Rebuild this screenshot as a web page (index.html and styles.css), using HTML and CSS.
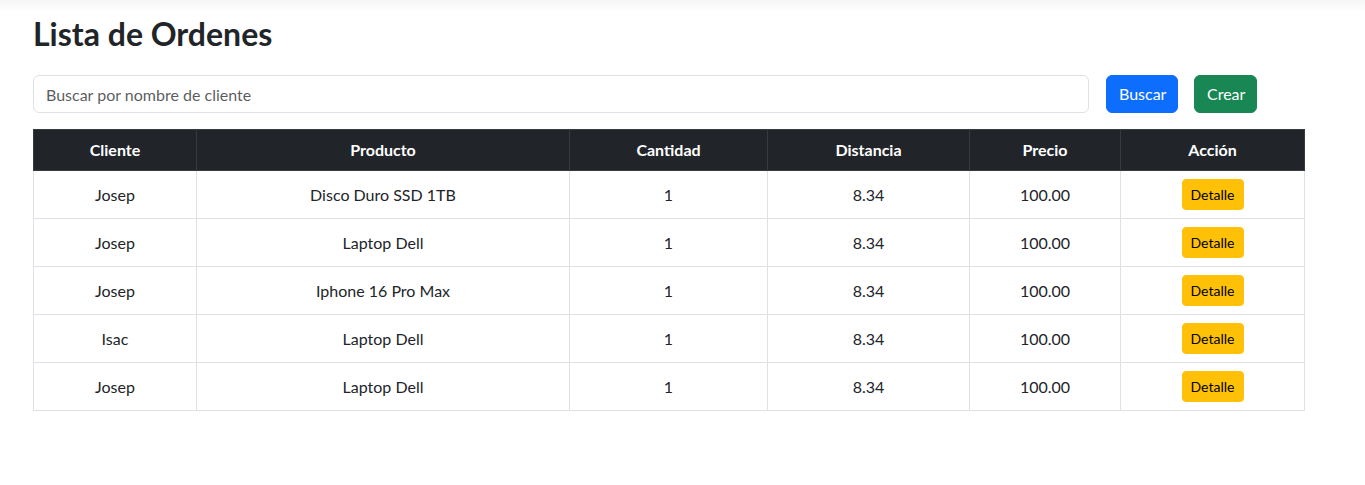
FILE: index.html
```html
<!DOCTYPE html>
<html lang="es">
<head>
<meta charset="utf-8">
<title>Lista de Ordenes</title>
<link rel="stylesheet" href="styles.css">
</head>
<body>
<div class="shade"></div>
<main class="container">
  <h2 class="title">Lista de Ordenes</h2>
  <div class="search-row">
    <input class="search-input" type="text" placeholder="Buscar por nombre de cliente">
    <button class="btn btn-primary">Buscar</button>
    <button class="btn btn-success">Crear</button>
  </div>
  <table class="orders">
    <colgroup>
      <col class="c1"><col class="c2"><col class="c3"><col class="c4"><col class="c5"><col class="c6">
    </colgroup>
    <thead>
      <tr><th>Cliente</th><th>Producto</th><th>Cantidad</th><th>Distancia</th><th>Precio</th><th>Acción</th></tr>
    </thead>
    <tbody>
      <tr><td>Josep</td><td>Disco Duro SSD 1TB</td><td>1</td><td>8.34</td><td>100.00</td><td><button class="btn-sm">Detalle</button></td></tr>
      <tr><td>Josep</td><td>Laptop Dell</td><td>1</td><td>8.34</td><td>100.00</td><td><button class="btn-sm">Detalle</button></td></tr>
      <tr><td>Josep</td><td>Iphone 16 Pro Max</td><td>1</td><td>8.34</td><td>100.00</td><td><button class="btn-sm">Detalle</button></td></tr>
      <tr><td>Isac</td><td>Laptop Dell</td><td>1</td><td>8.34</td><td>100.00</td><td><button class="btn-sm">Detalle</button></td></tr>
      <tr><td>Josep</td><td>Laptop Dell</td><td>1</td><td>8.34</td><td>100.00</td><td><button class="btn-sm">Detalle</button></td></tr>
    </tbody>
  </table>
</main>
</body>
</html>
```

FILE: styles.css
```css
* { box-sizing: border-box; }

html, body {
  margin: 0;
  padding: 0;
  background: #fff;
  color: #212529;
  font-family: "Lato", "Liberation Sans", sans-serif;
  font-size: 16px;
  line-height: 1.5;
}

.shade {
  height: 12px;
  margin-bottom: -12px;
  background: linear-gradient(#f6f6f6, #ffffff);
}

.container {
  padding: 15px 0 0 33px;
  width: 1305px;
}

.title {
  margin: 0 0 22px 0;
  font-size: 32px;
  line-height: 38.4px;
  font-weight: 700;
}

.search-row {
  display: flex;
  align-items: center;
  margin-bottom: 16px;
}

.search-input {
  width: 1056px;
  height: 38px;
  padding: 6px 12px;
  border: 1px solid #dee2e6;
  border-radius: 6px;
  font-family: inherit;
  font-size: 16px;
  color: #212529;
  outline: none;
}

.search-input::placeholder {
  color: rgba(33, 37, 41, 0.75);
}

.btn {
  height: 38px;
  padding: 6px 12px;
  border: 1px solid transparent;
  border-radius: 6px;
  font-family: inherit;
  font-size: 16px;
  line-height: 24px;
  color: #fff;
}

.btn-primary {
  background: #0d6efd;
  border-color: #0d6efd;
  margin-left: 17px;
  width: 72px;
}

.btn-success {
  background: #198754;
  border-color: #198754;
  margin-left: 16px;
  width: 63px;
}

.orders {
  width: 1271px;
  border-collapse: collapse;
  table-layout: fixed;
}

.c1 { width: 163px; }
.c2 { width: 373px; }
.c3 { width: 198px; }
.c4 { width: 202px; }
.c5 { width: 151px; }
.c6 { width: 184px; }

.orders th {
  background: #212529;
  color: #fff;
  font-weight: 700;
  padding: 8px;
  line-height: 24px;
  border: 1px solid #373b3e;
  text-align: center;
}

.orders td {
  padding: 8px;
  border: 1px solid #dee2e6;
  text-align: center;
  vertical-align: middle;
  line-height: 24px;
  height: 48px;
}

.btn-sm {
  height: 31px;
  width: 62px;
  padding: 4px 8px;
  border: 1px solid #ffc107;
  border-radius: 4px;
  background: #ffc107;
  color: #000;
  font-family: inherit;
  font-size: 14px;
  line-height: 21px;
  vertical-align: middle;
}
```
